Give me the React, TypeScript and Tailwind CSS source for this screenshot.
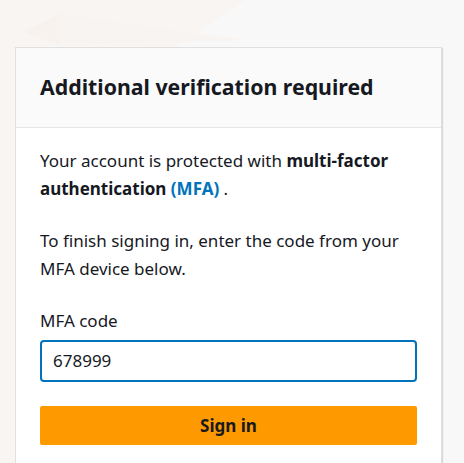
export default function App() {
    return (
        <main className="relative min-h-screen w-[464px] h-[463px] overflow-hidden bg-[#f8f8f8] font-['Noto_Sans',sans-serif] text-[#16191f]">
            {/* Faint background shapes */}
            <svg className="absolute left-0 top-0" width="464" height="463" viewBox="0 0 464 463">
                <rect x="0" y="0" width="60" height="463" fill="#f8f5f3" />
                <polygon points="0,0 245,0 60,125 0,130" fill="#f8f5f3" />
                <polygon points="22,32 60,14 60,45" fill="#f7f2ee" />
                <polygon points="60,14 245,40 60,45" fill="#f8f4f1" />
            </svg>

            <div className="relative ml-[15px] mt-[47px] w-[427px] border border-[#e0e0e0] bg-white shadow-[1px_1px_1px_rgba(0,0,0,0.12)]">
                <div className="h-[80px] border-b border-[#e6e6e6] bg-[#fafafa] px-6 flex items-center">
                    <h1 className="text-[21.3px] font-bold leading-none -mt-[2px]">Additional verification required</h1>
                </div>

                <div className="px-6 pt-[19px] pb-6">
                    <p className="text-[17px] leading-[28px]">
                        Your account is protected with <b>multi-factor authentication</b>{' '}
                        <b className="text-[#0073bb]">(MFA)</b> .
                    </p>
                    <p className="mt-6 text-[17px] leading-[28px]">
                        To finish signing in, enter the code from your MFA device below.
                    </p>

                    <label className="mt-6 block text-[17px] leading-[28px]">MFA code</label>
                    <div className="mt-[5px] h-[42px] rounded-[4px] border-2 border-[#0073bb] px-[11px] flex items-center text-[17px]">
                        678999
                    </div>

                    <button className="mt-6 h-[39px] w-full rounded-[2px] bg-[#ff9900] text-[17px] font-bold">
                        Sign in
                    </button>
                </div>
            </div>
        </main>
    );
}
